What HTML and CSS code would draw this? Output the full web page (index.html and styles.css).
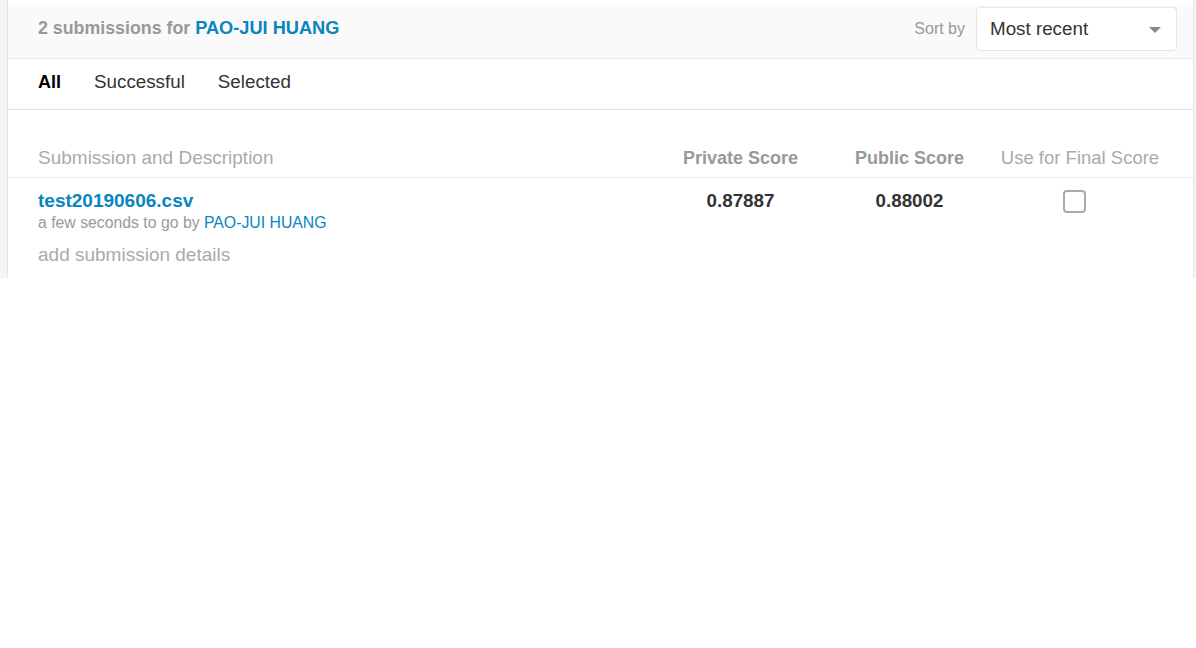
FILE: index.html
```html
<!DOCTYPE html>
<html>
<head>
<meta charset="utf-8">
<link rel="stylesheet" href="styles.css">
</head>
<body>
<div class="page">
  <div class="panel">
    <div class="head">
      <div class="title"><span class="count">2 submissions for</span><a class="user">PAO-JUI HUANG</a></div>
      <div class="sort">
        <span class="sort-label">Sort by</span>
        <div class="select"><span>Most recent</span><span class="caret"></span></div>
      </div>
    </div>
    <div class="tabs">
      <span class="tab active">All</span>
      <span class="tab">Successful</span>
      <span class="tab">Selected</span>
    </div>
    <div class="table">
      <div class="row th">
        <div class="c-desc">Submission and Description</div>
        <div class="c-score bold">Private Score</div>
        <div class="c-score bold">Public Score</div>
        <div class="c-score final">Use for Final Score</div>
      </div>
      <div class="row td">
        <div class="c-desc">
          <a class="file">test20190606.csv</a>
          <div class="meta">a few seconds to go by <a class="by">PAO-JUI HUANG</a></div>
          <div class="details">add submission details</div>
        </div>
        <div class="c-score val">0.87887</div>
        <div class="c-score val">0.88002</div>
        <div class="c-score"><span class="check"></span></div>
      </div>
    </div>
  </div>
</div>
</body>
</html>
```
FILE: styles.css
```css
html, body { margin: 0; padding: 0; background: #fff; }
body { font-family: "Liberation Sans", Arial, sans-serif; }
.page {
  height: 278px;
  background: #f4f5f6;
  padding-left: 7px;
  padding-right: 2px;
  box-sizing: border-box;
}
.panel {
  height: 100%;
  background: #fff;
  border-left: 1px solid #e2e4e6;
  border-right: 1px solid #e2e4e6;
  padding-top: 5px;
  box-sizing: border-box;
}
.head {
  height: 54px;
  box-sizing: border-box;
  background: #fafafa;
  border-bottom: 1px solid #e8e8e8;
  display: flex;
  align-items: center;
  justify-content: space-between;
  padding: 0 16px 6px 30px;
}
.title { font-size: 17.8px; font-weight: bold; }
.count { color: #999; margin-right: 5px; }
.user { color: #0a85be; font-size: 18.2px; }
.sort { display: flex; align-items: center; }
.sort-label { color: #999; font-size: 16px; margin-right: 11px; }
.select {
  width: 201px; height: 44px;
  box-sizing: border-box;
  border: 1px solid #e6e6e6;
  border-radius: 4px;
  background: #fff;
  display: flex; align-items: center; justify-content: space-between;
  padding: 0 15px 0 13px;
  font-size: 18.8px; color: #333;
}
.caret {
  width: 0; height: 0;
  border-left: 6px solid transparent;
  border-right: 6px solid transparent;
  border-top: 6px solid #888;
  margin-top: 2px;
}
.tabs {
  height: 51px;
  box-sizing: border-box;
  padding-bottom: 4px;
  border-bottom: 1px solid #e0e0e0;
  display: flex; align-items: center;
  padding-left: 30px;
  font-size: 18.8px; color: #333;
  gap: 33px;
}
.tab.active { color: #000; font-weight: bold; font-size: 18px; }
.table { padding: 0 30px; margin-top: 37px; }
.row { display: flex; }
.c-desc { flex: 1; }
.c-score { width: 169px; text-align: center; }
.th {
  font-size: 19px; color: #aaa;
  height: 30px; line-height: 22px;
  border-bottom: 1px solid #ececec;
  margin: 0 -30px; padding: 0 30px;
}
.th .bold { font-weight: bold; color: #999; font-size: 18px; }
.th .final { font-size: 18.5px; padding-left: 3px; box-sizing: border-box; }
.td { padding-top: 12px; }
.file { color: #0a85be; font-weight: bold; font-size: 19px; line-height: 22px; display: block; }
.meta { font-size: 15.8px; color: #999; line-height: 21px; }
.by { color: #0a85be; }
.details { font-size: 19px; color: #aaa; margin-top: 11px; line-height: 22px; }
.val { font-weight: bold; color: #333; font-size: 18.8px; line-height: 22px; }
.check {
  display: inline-block;
  width: 23px; height: 23px;
  box-sizing: border-box;
  border: 2px solid #aaa;
  border-radius: 4px;
  margin-right: 8px;
}
```
